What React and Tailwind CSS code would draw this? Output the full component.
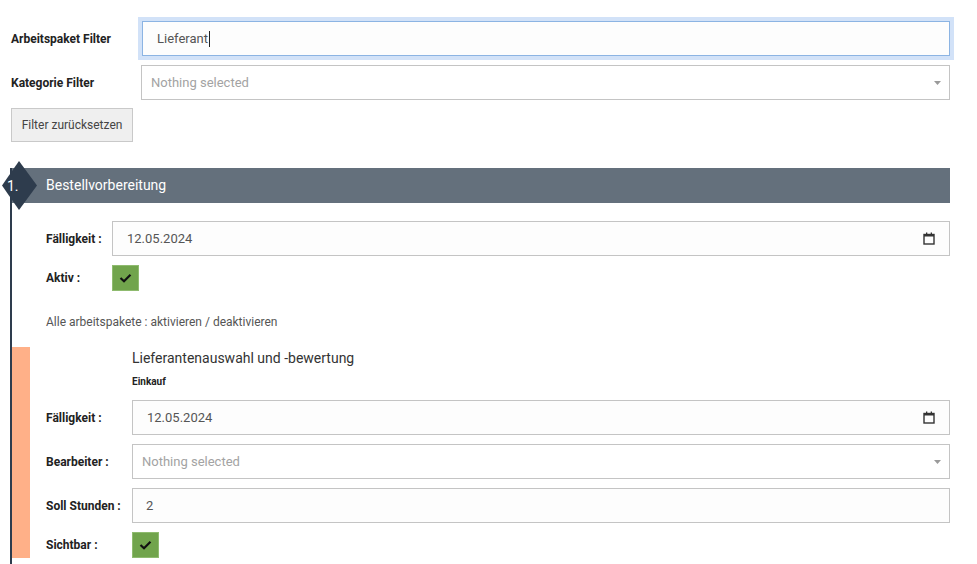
import React from 'react';

const font = { fontFamily: 'Roboto, "Liberation Sans", sans-serif' };

// ── small pieces ──────────────────────────────────────────────────────────────

function Caret() {
  return (
    <svg width="7" height="4" viewBox="0 0 7 4" className="flex-shrink-0">
      <path d="M0 0 L7 0 L3.5 4 Z" fill="#9a9a9a" />
    </svg>
  );
}

function CalendarIcon() {
  return (
    <svg width="12" height="13" viewBox="0 0 12 13" className="flex-shrink-0">
      <rect x="1" y="2.5" width="10" height="9.5" fill="none" stroke="#333" strokeWidth="1.4" />
      <rect x="1" y="2" width="10" height="2.5" fill="#333" />
      <rect x="3" y="0.5" width="1.3" height="2.5" fill="#333" />
      <rect x="7.7" y="0.5" width="1.3" height="2.5" fill="#333" />
    </svg>
  );
}

function Check() {
  return (
    <div className="w-[27px] h-[26px] flex items-center justify-center bg-[#71a44c] border border-[#8fbb6f]">
      <svg width="13" height="10" viewBox="0 0 13 10">
        <path d="M1.5 5 L5 8.2 L11.5 1.8" fill="none" stroke="#111" strokeWidth="2.2" />
      </svg>
    </div>
  );
}

function SelectBox({ className = '', pad = 'pl-[9px]' }) {
  return (
    <div
      className={`flex items-center justify-between h-[35px] border border-[#c4c4c4] bg-white pr-[8px] ${pad} ${className}`}
    >
      <span className="text-[13px] text-[#a3a3a3]">Nothing selected</span>
      <Caret />
    </div>
  );
}

function DateBox({ value, className = '', pad = 'pl-[14px]' }) {
  return (
    <div
      className={`flex items-center justify-between h-[35px] border border-[#c4c4c4] bg-[#fdfdfd] pr-[14px] ${pad} ${className}`}
    >
      <span className="text-[13px] text-[#555]">{value}</span>
      <CalendarIcon />
    </div>
  );
}

function FieldRow({ label, labelW, children, className = '' }) {
  return (
    <div className={`flex items-center ${className}`}>
      <span className={`${labelW} flex-shrink-0 text-[12px] font-bold text-[#222]`}>{label}</span>
      <div className="flex-1 min-w-0">{children}</div>
    </div>
  );
}

// ── Page ──────────────────────────────────────────────────────────────────────

export default function App() {
  return (
    <div className="min-h-[564px] bg-white overflow-hidden pr-[27px]" style={font}>
      {/* Filters */}
      <div className="pl-[11px] pt-[21px]">
        <FieldRow label="Arbeitspaket Filter" labelW="w-[131px]">
          <div className="h-[35px] flex items-center border border-[#8cb4e3] bg-[#fdfdfd] pl-[14px] shadow-[0_0_0_4px_#d2e2f8]">
            <span className="text-[13px] text-[#555]">Lieferant</span>
            <span className="inline-block w-px h-[16px] bg-[#222] ml-px" />
          </div>
        </FieldRow>

        <FieldRow label="Kategorie Filter" labelW="w-[130px]" className="mt-[9px]">
          <SelectBox />
        </FieldRow>

        <button className="mt-[8px] h-[34px] w-[122px] bg-[#efefef] border border-[#c9c9c9] text-[12px] text-[#444]">
          Filter zurücksetzen
        </button>
      </div>

      {/* Phase 1 */}
      <div className="relative mt-[26px] ml-[10px] border-l-2 border-[#2e3c4d] pb-6">
        <div className="h-[35px] bg-[#64707c] flex items-center pl-[34px]">
          <span className="text-[14px] text-white">Bestellvorbereitung</span>
        </div>

        {/* diamond marker */}
        <div className="absolute left-[-10px] top-[-7px] w-[35px] h-[49px]">
          <svg width="35" height="49" viewBox="0 0 35 49" className="absolute inset-0">
            <polygon points="17,0 35,24.5 17,49 0,24.5" fill="#2e3c4d" />
          </svg>
          <span className="absolute left-[5px] top-[15px] text-[14px] text-white">1.</span>
        </div>

        <div className="pl-[34px]">
          <FieldRow label="Fälligkeit :" labelW="w-[66px]" className="mt-[18px]">
            <DateBox value="12.05.2024" />
          </FieldRow>
          <FieldRow label="Aktiv :" labelW="w-[66px]" className="mt-[9px]">
            <Check />
          </FieldRow>
          <p className="mt-[22px] text-[12px] text-[#555]">
            Alle arbeitspakete : aktivieren / deaktivieren
          </p>
        </div>

        {/* Work package */}
        <div className="flex mt-[16px]">
          <div className="w-[18px] flex-shrink-0 bg-[#ffb088]" />
          <div className="flex-1 min-w-0 pl-[16px]">
            <div className="pl-[86px] pt-px">
              <p className="text-[14px] text-[#333] leading-[20px]">Lieferantenauswahl und -bewertung</p>
              <p className="mt-[6px] text-[10px] font-bold text-[#222]">Einkauf</p>
            </div>
            <FieldRow label="Fälligkeit :" labelW="w-[86px]" className="mt-[11px]">
              <DateBox value="12.05.2024" />
            </FieldRow>
            <FieldRow label="Bearbeiter :" labelW="w-[86px]" className="mt-[9px]">
              <SelectBox />
            </FieldRow>
            <FieldRow label="Soll Stunden :" labelW="w-[86px]" className="mt-[9px]">
              <div className="h-[35px] flex items-center border border-[#c4c4c4] bg-[#fdfdfd] pl-[13px]">
                <span className="text-[13px] text-[#555]">2</span>
              </div>
            </FieldRow>
            <FieldRow label="Sichtbar :" labelW="w-[86px]" className="mt-[9px]">
              <Check />
            </FieldRow>
          </div>
        </div>
      </div>
    </div>
  );
}
